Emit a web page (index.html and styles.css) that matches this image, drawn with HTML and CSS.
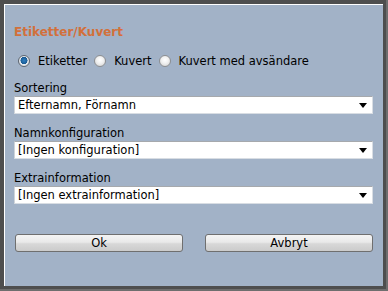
FILE: index.html
```html
<!DOCTYPE html>
<html>
<head>
<meta charset="utf-8">
<link rel="stylesheet" href="styles.css">
</head>
<body>
<div class="frame">
  <div class="dialog">
    <h1 class="title">Etiketter/Kuvert</h1>
    <div class="radios">
      <label class="radio"><span class="dot checked"></span>Etiketter</label>
      <label class="radio"><span class="dot"></span>Kuvert</label>
      <label class="radio"><span class="dot"></span>Kuvert med avsändare</label>
    </div>
    <div class="field first">
      <div class="label">Sortering</div>
      <div class="select"><span>Efternamn, Förnamn</span><span class="arrow"></span></div>
    </div>
    <div class="field">
      <div class="label">Namnkonfiguration</div>
      <div class="select"><span>[Ingen konfiguration]</span><span class="arrow"></span></div>
    </div>
    <div class="field">
      <div class="label">Extrainformation</div>
      <div class="select"><span>[Ingen extrainformation]</span><span class="arrow"></span></div>
    </div>
    <div class="buttons">
      <div class="btn">Ok</div>
      <div class="btn">Avbryt</div>
    </div>
  </div>
</div>
</body>
</html>
```
FILE: styles.css
```css
html, body {
  margin: 0;
  padding: 0;
}
body {
  width: 388px;
  height: 291px;
  background: #6e6e6e;
  font-family: "DejaVu Sans", Verdana, sans-serif;
  font-size: 11.5px;
  color: #000;
  overflow: hidden;
}
.frame {
  width: 386px;
  height: 289px;
  background: #4e4e4e;
  padding: 4px 0 0 4px;
  box-sizing: border-box;
}
.dialog {
  width: 379px;
  height: 282px;
  box-sizing: border-box;
  background: #a2b2c7;
  border-top: 1px solid #ffffff;
  border-left: 1px solid #ffffff;
  padding: 0 10px 0 9px;
  display: flex;
  flex-direction: column;
}
.title {
  margin: 20px 0 0 0;
  font-size: 12px;
  font-weight: bold;
  color: #d2703b;
  line-height: 15px;
  height: 15px;
}
.radios {
  display: flex;
  align-items: center;
  margin-top: 13px;
  height: 16px;
  padding-left: 4px;
}
.radio {
  display: flex;
  align-items: center;
  margin-right: 7px;
}
.dot {
  width: 12px;
  height: 12px;
  box-sizing: border-box;
  border-radius: 50%;
  border: 1px solid #8d8f92;
  background: radial-gradient(circle at 50% 40%, #ffffff 0%, #f2f2f2 40%, #cfcfcf 100%);
  margin-right: 8px;
}
.dot.checked {
  border-color: #5d6570;
  background: radial-gradient(circle at 50% 45%, #2f7fc0 0%, #1b5b94 45%, #e8ecf0 50%, #c8ccd0 100%);
}
.field {
  display: flex;
  flex-direction: column;
  margin-top: 12px;
}
.field.first {
  margin-top: 12px;
}
.label {
  line-height: 15px;
  height: 15px;
}
.select {
  height: 18px;
  box-sizing: border-box;
  background: #fff;
  border: 1px solid #d8dde3;
  border-top-color: #a6a9ad;
  border-left-color: #d0d4d9;
  display: flex;
  align-items: center;
  justify-content: space-between;
  padding: 0 4px 0 3px;
  line-height: 16px;
}
.arrow {
  width: 0;
  height: 0;
  border-left: 4px solid transparent;
  border-right: 4px solid transparent;
  border-top: 5px solid #000;
  margin-right: 1px;
}
.buttons {
  display: flex;
  justify-content: space-between;
  margin-top: 30px;
  padding: 0 0 0 1px;
}
.btn {
  width: 168px;
  height: 18px;
  box-sizing: border-box;
  border: 1px solid #6f6f6f;
  border-radius: 3px;
  background: linear-gradient(#f4f4f4 0%, #e9e9e9 45%, #d8d8d8 55%, #cbcbcb 100%);
  text-align: center;
  line-height: 16px;
}
```
